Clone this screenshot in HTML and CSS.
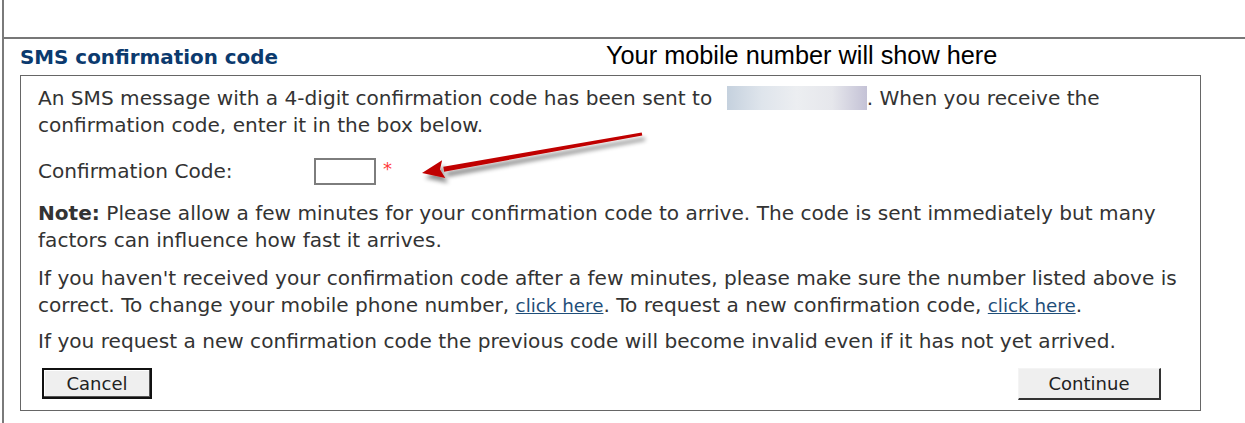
FILE: index.html
```html
<!DOCTYPE html>
<html lang="en">
<head>
<meta charset="utf-8">
<title>SMS confirmation code</title>
<link rel="stylesheet" href="styles.css">
</head>
<body>
<div class="frame">
  <div class="panel">
    <div class="panel-head">
      <h2 class="panel-title">SMS confirmation code</h2>
      <span class="callout">Your mobile number will show here</span>
    </div>
    <div class="box">
      <p class="para">An SMS message with a 4-digit confirmation code has been sent to <span class="masked" aria-label="hidden number"></span>. When you receive the confirmation code, enter it in the box below.</p>
      <div class="field-row">
        <label class="field-label" for="code">Confirmation Code:</label>
        <input class="code-input" id="code" type="text" maxlength="4">
        <span class="required">*</span>
      </div>
      <p class="para note"><b>Note:</b> Please allow a few minutes for your confirmation code to arrive. The code is sent immediately but many factors can influence how fast it arrives.</p>
      <p class="para gap-s">If you haven't received your confirmation code after a few minutes, please make sure the number listed above is correct. To change your mobile phone number, <a class="link" href="#">click here</a>. To request a new confirmation code, <a class="link" href="#">click here</a>.</p>
      <p class="para gap-xs">If you request a new confirmation code the previous code will become invalid even if it has not yet arrived.</p>
      <div class="actions">
        <button class="btn btn-cancel" type="button">Cancel</button>
        <button class="btn btn-continue" type="button">Continue</button>
      </div>
      <svg class="pointer" width="260" height="64" viewBox="0 0 260 64" aria-hidden="true">
        <defs>
          <filter id="shade" x="-10%" y="-30%" width="130%" height="180%">
            <feDropShadow dx="3" dy="5" stdDeviation="2" flood-color="#000" flood-opacity="0.45"/>
          </filter>
        </defs>
        <g filter="url(#shade)" fill="#c00000">
          <polygon points="28.1,45.7 27.3,40.7 225.7,6.5 226.3,9.5"/>
          <polygon points="6,47 26.1,34.3 24,43.5 29.3,52.1"/>
        </g>
      </svg>
    </div>
  </div>
</div>
</body>
</html>
```
FILE: styles.css
```css
html, body {
  margin: 0;
  padding: 0;
  background: #fff;
}

.frame {
  margin-left: 2px;
  border-left: 2px solid #7a7a7a;
  min-height: 423px;
  padding-top: 37px;
  box-sizing: border-box;
}

.panel {
  border-top: 2px solid #777;
  padding-left: 16px;
}

.panel-head {
  position: relative;
  height: 36px;
  display: flex;
  align-items: center;
}

.panel-title {
  margin: 0;
  font-family: "DejaVu Sans", Verdana, sans-serif;
  font-size: 19.9px;
  font-weight: bold;
  color: #0b3a6e;
}

.callout {
  position: absolute;
  left: 586px;
  top: 2px;
  font-family: "Liberation Sans", Arial, sans-serif;
  font-size: 25.3px;
  color: #000;
}

.box {
  position: relative;
  width: 1181px;
  border: 1px solid #666;
  padding: 9px 17px 10px 17px;
  box-sizing: border-box;
  font-family: "DejaVu Sans", Verdana, sans-serif;
  font-size: 20.1px;
  line-height: 27px;
  color: #333;
}

.para {
  margin: 0;
}

.masked {
  display: inline-block;
  width: 140px;
  height: 24px;
  margin-left: 8px;
  vertical-align: -5px;
  background: linear-gradient(90deg, #c5d1de 0%, #dfe5ec 25%, #eceef1 50%, #e6e7ec 75%, #c4c2d6 100%);
}

.field-row {
  display: flex;
  align-items: center;
  margin-top: 19px;
  height: 27px;
}

.field-label {
  width: 276px;
  flex: none;
}

.code-input {
  width: 62px;
  height: 27px;
  box-sizing: border-box;
  border: 2px solid #7d7d7d;
  margin: 0;
  padding: 0 4px;
  background: #fff;
}

.required {
  color: #ff3a3a;
  margin-left: 7px;
  font-size: 18px;
  align-self: flex-start;
  line-height: 22px;
}

.note {
  margin-top: 15px;
}

.gap-s {
  margin-top: 11px;
}

.gap-xs {
  margin-top: 9px;
}

.link {
  color: #1f4e79;
  text-decoration: underline;
  font-size: 18.3px;
}

.actions {
  display: flex;
  justify-content: space-between;
  margin-top: 13px;
  padding-left: 4px;
  padding-right: 22px;
}

.btn {
  font-family: "DejaVu Sans", Verdana, sans-serif;
  font-size: 18px;
  color: #222;
  background: #efefef;
  margin: 0;
  padding: 0;
  box-sizing: border-box;
}

.btn-cancel {
  width: 110px;
  height: 31px;
  border: 2px solid #111;
  box-shadow: inset -1px -1px 0 #555, inset 1px 1px 0 #fff;
}

.btn-continue {
  width: 143px;
  height: 32px;
  border-style: solid;
  border-width: 1px 2px 2px 1px;
  border-color: #f4f4f4 #333 #333 #f4f4f4;
}

.pointer {
  position: absolute;
  left: 395px;
  top: 50px;
  overflow: visible;
}
```
